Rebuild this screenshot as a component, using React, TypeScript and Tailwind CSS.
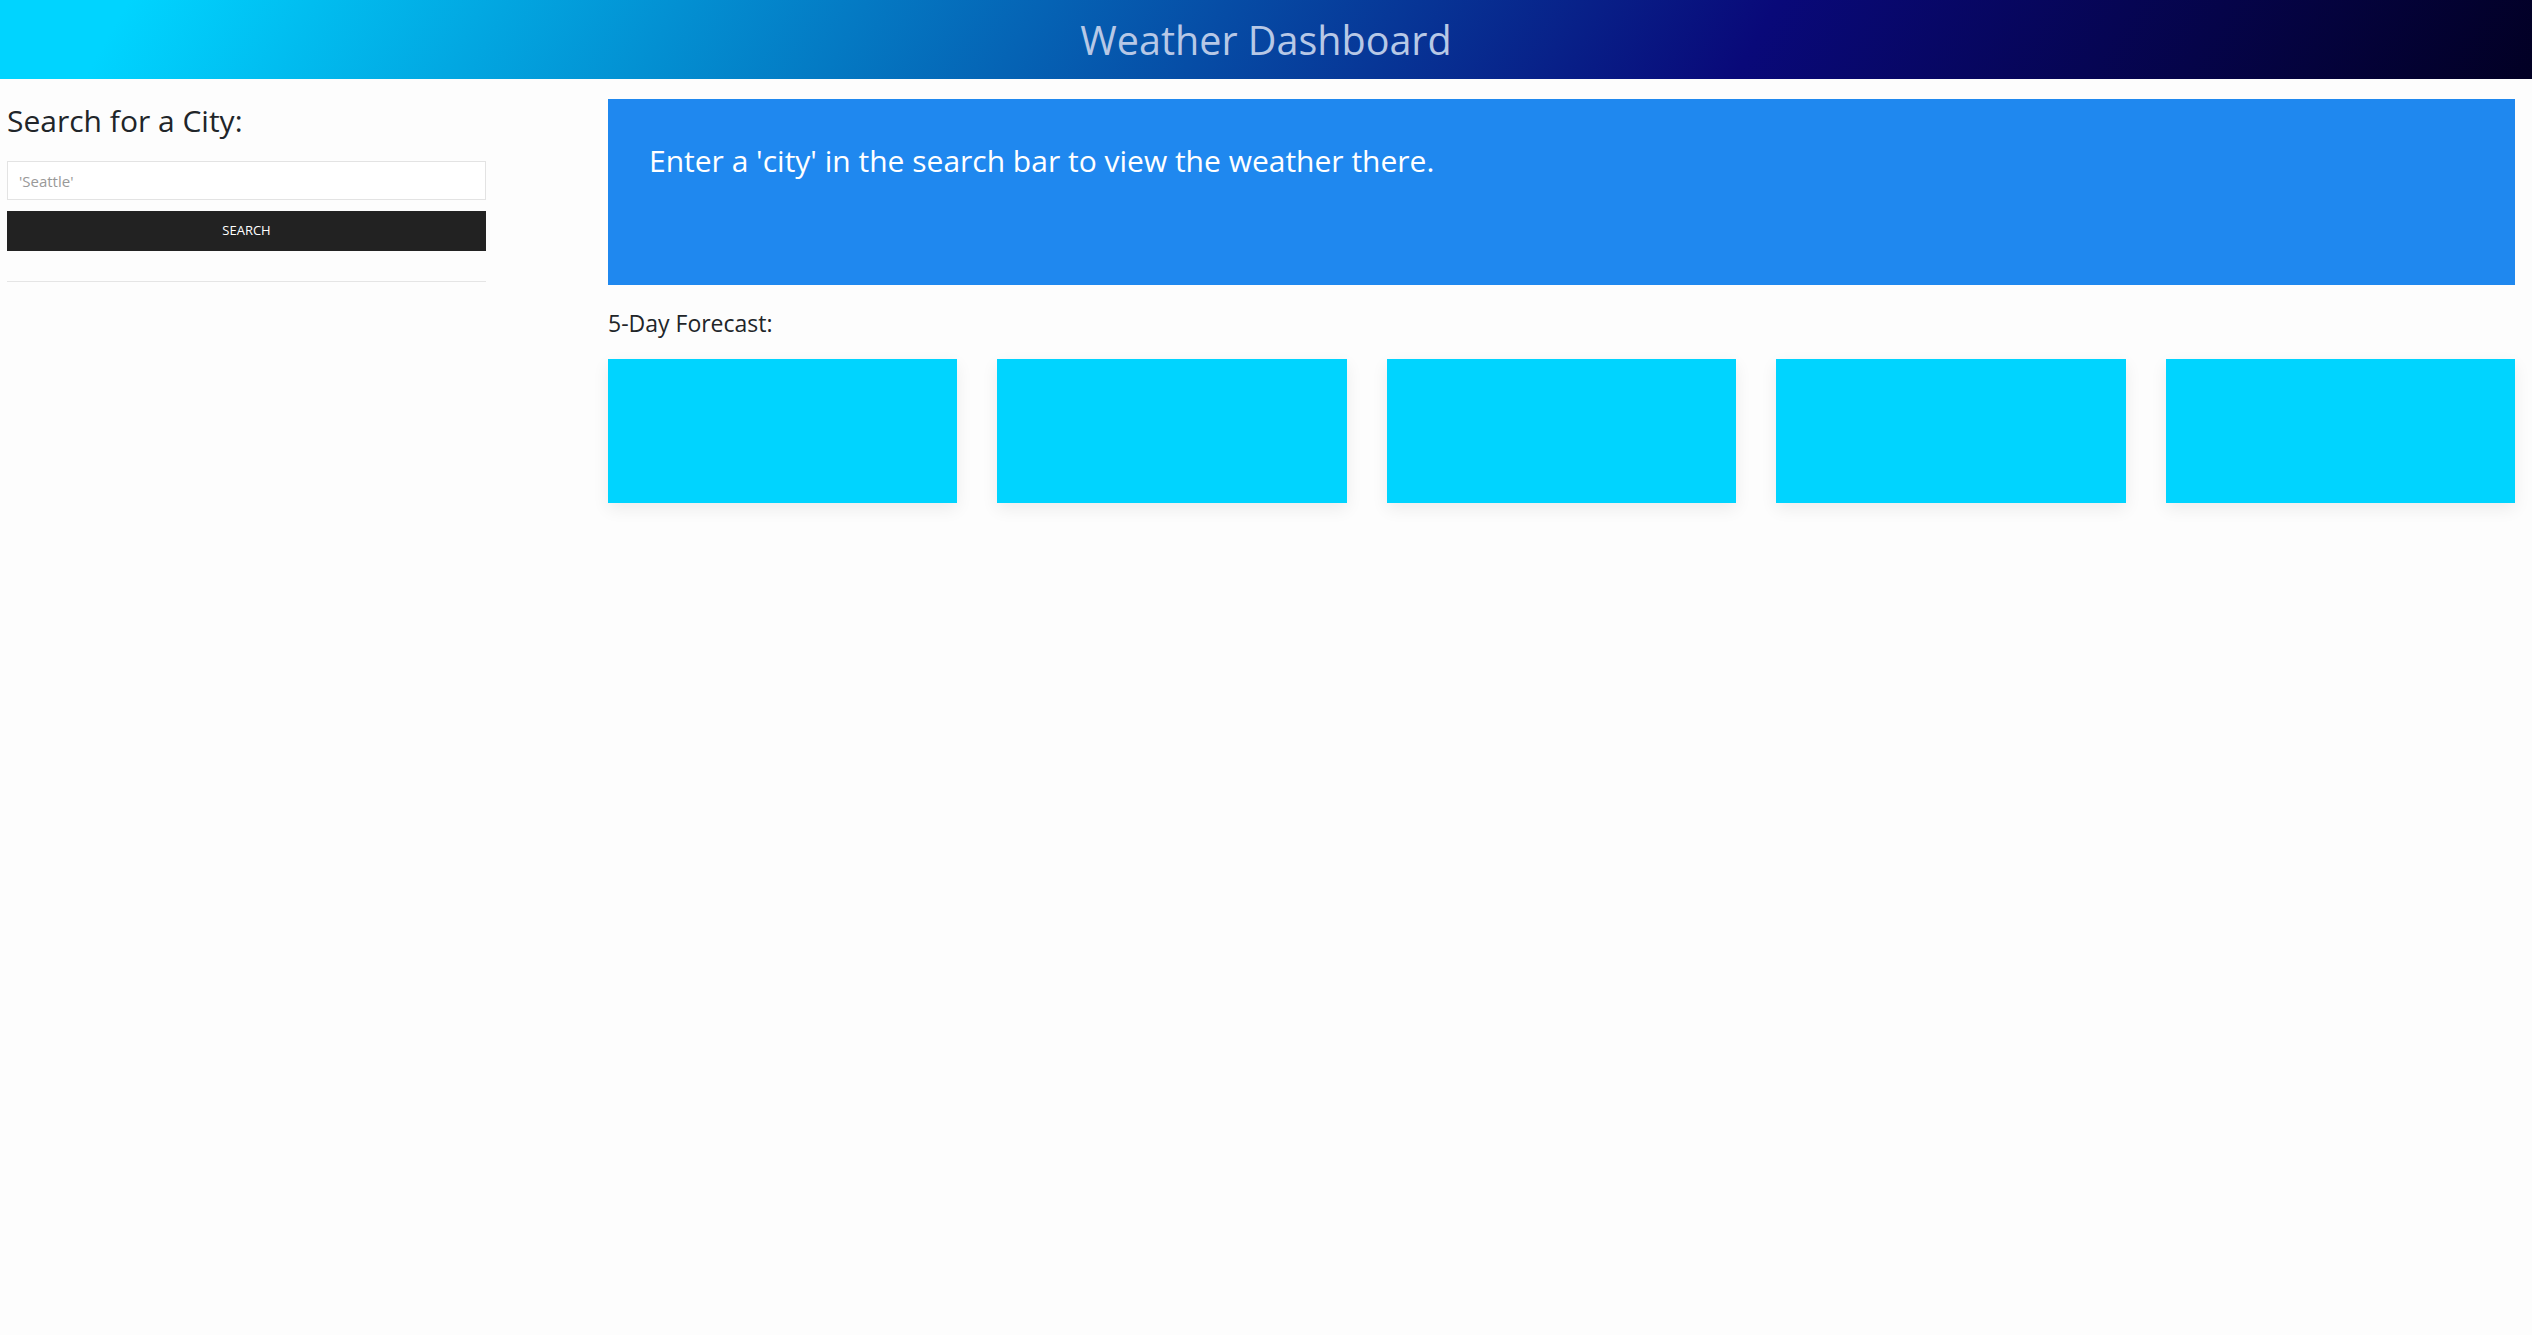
import React from 'react'

const days = [1, 2, 3, 4, 5]

export default function App() {
  return (
    <div className="min-h-screen bg-[#fdfdfd] text-[#212529] font-['Open_Sans',sans-serif]">
      {/* Header */}
      <header className="h-[79px] flex items-center justify-center bg-[linear-gradient(120deg,#00d4ff_5%,#090979_69%,#020024_100%)]">
        <h1 className="text-[39.5px] leading-[48px] font-normal text-[#b7c8e6]">Weather Dashboard</h1>
      </header>

      <div className="flex">
        {/* Search column */}
        <aside className="w-[486px] shrink-0 pl-[7px] pt-[24px]">
          <h2 className="text-[30px] leading-[36px] font-normal">Search for a City:</h2>
          <input
            type="text"
            placeholder="'Seattle'"
            className="mt-[22px] block w-full h-[39px] px-[11px] border border-[#e3e3e3] bg-white text-[15px] placeholder:text-[#999] outline-none"
          />
          <button className="mt-[11px] block w-full h-[40px] bg-[#222222] text-white text-[13px] uppercase">
            Search
          </button>
          <hr className="mt-[30px] border-t border-[#e5e5e5]" />
        </aside>

        {/* Main column */}
        <main className="flex-1 ml-[122px] mr-[17px] pt-[20px]">
          <section className="h-[186px] bg-[#1f88ef] pl-[41px] pt-[44px]">
            <p className="text-[30px] leading-[36px] text-white">
              Enter a 'city' in the search bar to view the weather there.
            </p>
          </section>

          <h3 className="mt-[24px] text-[23px] leading-[28px] font-normal">5-Day Forecast:</h3>

          <div className="mt-[22px] grid grid-cols-5 gap-[40px]">
            {days.map((d) => (
              <div key={d} className="h-[144px] bg-[#00d4ff] shadow-[0_6px_16px_rgba(0,0,0,0.07)]" />
            ))}
          </div>
        </main>
      </div>
    </div>
  )
}
